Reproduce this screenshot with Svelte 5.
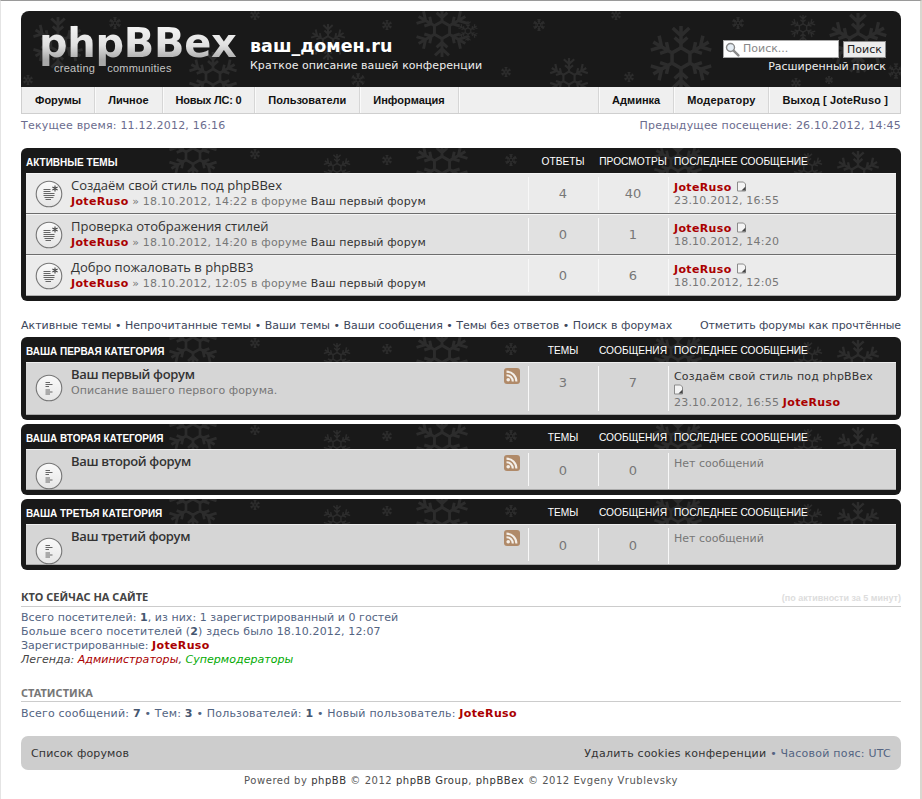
<script>
  const topics = [
    { t: 'Создаём свой стиль под phpBBex', d: '18.10.2012, 14:22', a: 4, b: 40, l: '23.10.2012, 16:55' },
    { t: 'Проверка отображения стилей', d: '18.10.2012, 14:20', a: 0, b: 1, l: '18.10.2012, 14:20' },
    { t: 'Добро пожаловать в phpBB3', d: '18.10.2012, 12:05', a: 0, b: 6, l: '18.10.2012, 12:05' }
  ];
  const flakes = [
    [37, 32, 26], [94, 12, 6], [234, 4, 5], [7, 69, 5], [307, 31, 18], [366, 14, 5], [421, 19, 27], [337, 69, 7], [192, 66, 25],
    [447, 20, 10], [518, 14, 6], [485, 61, 5], [548, 67, 20], [595, 4, 5], [608, 66, 5], [660, 47, 32], [717, 12, 6],
    [782, 17, 13], [837, 32, 30], [775, 72, 5], [808, 69, 4], [875, 60, 8]
  ];
  const barFlakes = [
    [172, 8, 25], [234, 6, 5], [316, 20, 14], [366, 12, 5], [421, 17, 27], [490, 12, 6], [657, 15, 25], [787, 20, 15], [837, 25, 22]
  ];
  const arms = [0, 60, 120, 180, 240, 300];
</script>

{#snippet flake(x, y, r)}
  <g transform="translate({x} {y}) scale({r / 10})" stroke-width={Math.max(1.1, 12 / r)}>
    {#each arms as a}
      <g transform="rotate({a})">
        <path d="M0 -3V-10M0 -7L-2.6 -9.4M0 -7L2.6 -9.4M0 -4.6L-2 -6.4M0 -4.6L2 -6.4" />
      </g>
    {/each}
    <path d="M0 -3.2L2.8 -1.6V1.6L0 3.2L-2.8 1.6V-1.6Z" />
  </g>
{/snippet}

{#snippet snow(list, h)}
  <svg class="snow" width="880" height={h} viewBox="0 0 880 {h}" aria-hidden="true">
    {#each list as f}{@render flake(f[0], f[1], f[2])}{/each}
  </svg>
{/snippet}

{#snippet bubble(star)}
  <svg class="bubble" width="28" height="28" viewBox="0 0 28 28" aria-hidden="true">
    <defs>
      <linearGradient id="bub" x1="0" y1="0" x2="0" y2="1">
        <stop offset="0" stop-color="#fafafa" /><stop offset="1" stop-color="#e6e6e6" />
      </linearGradient>
    </defs>
    <circle cx="14" cy="14" r="12.8" fill="url(#bub)" stroke="#777" stroke-width="1.1" />
    {#if star}
      <path d="M8.5 9.5H15.5M8.5 11.5H15.5M8.5 13.5H19.5M8.5 15.5H19.5M9.5 17.5H18.5M10.5 19.5H16" stroke="#666" stroke-width="1" fill="none" />
      <path d="M20 5.5V11.5M17.4 7L22.6 10M22.6 7L17.4 10" stroke="#444" stroke-width="1.1" fill="none" />
    {:else}
      <path d="M10.5 8.5H15M10.5 10.5H17.5M10.5 12.5H14M10.5 16H15M10.5 18H17.5M10.5 20H15" stroke="#666" stroke-width="1" fill="none" />
    {/if}
  </svg>
{/snippet}

{#snippet post()}
  <svg class="post" width="10" height="11" viewBox="0 0 10 11" aria-hidden="true">
    <path d="M.5 1H6.5L8.5 3V10H.5Z" fill="#f4f4f4" stroke="#8a8a8a" />
    <path d="M4.5 9.5L8.5 5.5V9.5Z" fill="#444" />
  </svg>
{/snippet}

{#snippet rss()}
  <svg class="rss" width="16" height="16" viewBox="0 0 16 16" aria-hidden="true">
    <rect width="16" height="16" rx="3" fill="#b08a69" />
    <circle cx="4.2" cy="11.8" r="1.8" fill="#f4efe9" />
    <path d="M2.5 7.2A6.3 6.3 0 0 1 8.8 13.5M2.5 3.6A9.9 9.9 0 0 1 12.4 13.5" fill="none" stroke="#f4efe9" stroke-width="2.1" />
  </svg>
{/snippet}

{#snippet forum(title, head, desc, cls, c1, c2)}
  <section class="block">
    {@render snow(barFlakes, 25)}
    <div class="bar">
      <span class="bar-title">{head}</span>
      <span class="c1 ch">ТЕМЫ</span>
      <span class="c2 ch">СООБЩЕНИЯ</span>
      <span class="c3 ch">ПОСЛЕДНЕЕ СООБЩЕНИЕ</span>
    </div>
    <div class="row forum {cls}">
      {@render bubble(false)}
      <div class="main">
        <div class="topic">{title}</div>
        {#if desc}<div class="desc">{desc}</div>{/if}
      </div>
      {@render rss()}
      <div class="c1 num">{c1}</div>
      <div class="c2 num">{c2}</div>
      <div class="c3 last">
        {#if c1 === 3}
          <div class="dark wide">Создаём свой стиль под phpBBex</div>
          <div class="icon-line">{@render post()}</div>
          <div class="grey date">23.10.2012, 16:55 <b class="red">JoteRuso</b></div>
        {:else}
          <div class="grey">Нет сообщений</div>
        {/if}
      </div>
    </div>
  </section>
{/snippet}

<div class="page">
  <header class="head">
    {@render snow(flakes, 76)}
    <div class="logo">
      <span class="logo-word">phpBBex</span>
      <span class="logo-sub"><span>creating</span><span>communities</span></span>
    </div>
    <div class="site">
      <div class="site-name">ваш_домен.ru</div>
      <div class="site-desc">Краткое описание вашей конференции</div>
    </div>
    <div class="search">
      <div class="search-row">
        <div class="search-input">
          <svg width="15" height="15" viewBox="0 0 15 15" aria-hidden="true">
            <circle cx="5.5" cy="5.5" r="4" fill="#e6eef5" stroke="#8a8a8a" stroke-width="1.4" />
            <path d="M8.6 8.6L13.4 13.4" stroke="#8c8c8c" stroke-width="2.4" stroke-linecap="round" />
          </svg>
          <span>Поиск...</span>
        </div>
        <div class="search-btn">Поиск</div>
      </div>
      <div class="adv">Расширенный поиск</div>
    </div>
  </header>

  <nav class="nav">
    <span class="nav-item">Форумы</span>
    <span class="nav-item">Личное</span>
    <span class="nav-item nls">Новых ЛС: 0</span>
    <span class="nav-item">Пользователи</span>
    <span class="nav-item">Информация</span>
    <span class="nav-gap"></span>
    <span class="nav-item left">Админка</span>
    <span class="nav-item left mod">Модератору</span>
    <span class="nav-item left end">Выход [ JoteRuso ]</span>
  </nav>

  <div class="times">
    <span>Текущее время: 11.12.2012, 16:16</span>
    <span>Предыдущее посещение: 26.10.2012, 14:45</span>
  </div>

  <section class="block active">
    {@render snow(barFlakes, 25)}
    <div class="bar">
      <span class="bar-title">АКТИВНЫЕ ТЕМЫ</span>
      <span class="c1 ch">ОТВЕТЫ</span>
      <span class="c2 ch">ПРОСМОТРЫ</span>
      <span class="c3 ch">ПОСЛЕДНЕЕ СООБЩЕНИЕ</span>
    </div>
    {#each topics as r, i}
      <div class="row topic-row" class:alt={i === 1}>
        {@render bubble(true)}
        <div class="main">
          <div class="topic">{r.t}</div>
          <div class="meta"><b class="red">JoteRuso</b> » {r.d} в форуме <span class="dark">Ваш первый форум</span></div>
        </div>
        <div class="c1 num">{r.a}</div>
        <div class="c2 num">{r.b}</div>
        <div class="c3 last">
          <div class="user"><b class="red">JoteRuso</b> {@render post()}</div>
          <div class="grey date">{r.l}</div>
        </div>
      </div>
    {/each}
  </section>

  <div class="links">
    <span>Активные темы <i>•</i> Непрочитанные темы <i>•</i> Ваши темы <i>•</i> Ваши сообщения <i>•</i> Темы без ответов <i>•</i> Поиск в форумах</span>
    <span class="mark">Отметить форумы как прочтённые</span>
  </div>

  {@render forum('Ваш первый форум', 'ВАША ПЕРВАЯ КАТЕГОРИЯ', 'Описание вашего первого форума.', 'tall', 3, 7)}
  {@render forum('Ваш второй форум', 'ВАША ВТОРАЯ КАТЕГОРИЯ', '', 'short', 0, 0)}
  {@render forum('Ваш третий форум', 'ВАША ТРЕТЬЯ КАТЕГОРИЯ', '', 'short', 0, 0)}

  <div class="h3 online-h">
    <span>КТО СЕЙЧАС НА САЙТЕ</span>
    <small>(по активности за 5 минут)</small>
  </div>
  <div class="lines">
    <div class="s05">Всего посетителей: <b>1</b>, из них: 1 зарегистрированный и 0 гостей</div>
    <div class="s14">Больше всего посетителей (<b>2</b>) здесь было 18.10.2012, 12:07</div>
    <div>Зарегистрированные: <b class="red">JoteRuso</b></div>
    <div class="s05"><em>Легенда: <span class="admin">Администраторы</span>, <span class="smod">Супермодераторы</span></em></div>
  </div>

  <div class="h3 stat-h"><span>СТАТИСТИКА</span></div>
  <div class="lines stat-lines">
    <div class="s22">Всего сообщений: <b>7</b> • Тем: <b>3</b> • Пользователей: <b>1</b> • Новый пользователь: <b class="red">JoteRuso</b></div>
  </div>

  <footer class="foot">
    <span class="dark fl">Список форумов</span>
    <span class="fr"><span class="dark">Удалить cookies конференции</span> <i>•</i> Часовой пояс: UTC</span>
  </footer>
  <div class="copy">Powered by <span>phpBB</span> © 2012 <span>phpBB Group</span>, <span>phpBBex</span> © 2012 Evgeny Vrublevsky</div>
</div>

<style>
  :global(body) { margin: 0; background: #fff; }
  .page {
    box-sizing: border-box;
    width: 922px;
    height: 799px;
    padding: 10px 19px 0 20px;
    border-top: 1px solid #9a9a9a;
    border-left: 1px solid #e4e4e4;
    border-right: 2px solid #d8d8d0;
    font: 11px/14px "DejaVu Sans", Verdana, sans-serif;
    color: #536482;
    overflow: hidden;
  }
  .head {
    position: relative;
    display: flex;
    height: 76px;
    border-radius: 8px 8px 0 0;
    background: #191919;
    overflow: hidden;
    color: #fff;
  }
  .snow { position: absolute; left: 0; top: 0; fill: none; stroke: #2c2c2c; }
  .logo { position: relative; width: 229px; flex: none; }
  .logo-word {
    position: absolute;
    left: 18px;
    top: 8px;
    font: 700 40px/48px "DejaVu Sans", sans-serif;
    letter-spacing: -.3px;
    background: linear-gradient(180deg, #f2f2f2 20%, #e0e0e0 55%, #a8a8a8 85%);
    -webkit-background-clip: text;
    background-clip: text;
    color: transparent;
  }
  .logo-sub {
    position: absolute;
    left: 33px;
    top: 50px;
    display: flex;
    gap: 12px;
    font: 11px/14px "Liberation Sans", Arial, sans-serif;
    letter-spacing: .25px;
    color: #c4c4c4;
  }
  .site { position: relative; padding-top: 24px; }
  .site-name { font: 700 17.5px/22px "DejaVu Sans", Verdana, sans-serif; }
  .site-desc { line-height: 14px; margin-top: 2px; color: #eee; letter-spacing: .06px; }
  .search { position: absolute; right: 15px; top: 29px; width: 163px; }
  .search-row { display: flex; justify-content: flex-end; gap: 4px; }
  .search-input {
    box-sizing: border-box;
    display: flex;
    align-items: center;
    gap: 3px;
    width: 116px;
    height: 18px;
    padding-left: 1px;
    border: 1px solid #aaa;
    background: #fff;
    color: #888;
  }
  .search-btn {
    box-sizing: border-box;
    width: 43px;
    height: 17px;
    margin-top: 1px;
    border: 1px solid #8a8a8a;
    background: #ececec;
    color: #222;
    text-align: center;
    line-height: 15px;
  }
  .adv { margin-top: 2px; text-align: right; color: #eee; }
  .nav {
    box-sizing: border-box;
    display: flex;
    height: 27px;
    background: #efefef;
    border: 1px solid #cfcfcf;
    border-top: 0;
    font: 700 11px/27px "Liberation Sans", Arial, sans-serif;
    color: #111;
  }
  .nav-item { padding: 0 13px; border-right: 1px solid #d6d6d6; box-shadow: 1px 0 0 #fafafa; }
  .nls { letter-spacing: -.25px; }
  .nav-gap { flex: 1; }
  .nav-item.left { border-right: 0; border-left: 1px solid #d6d6d6; box-shadow: inset 1px 0 0 #fafafa; }
  .nav-item.mod { letter-spacing: .2px; }
  .nav-item.end { padding-right: 12px; letter-spacing: .12px; }
  .times { display: flex; justify-content: space-between; margin-top: 5px; color: #6b6c8e; letter-spacing: .2px; }
  .block {
    position: relative;
    box-sizing: border-box;
    padding: 0 5px 5px;
    border-radius: 6px;
    background: #191919;
    overflow: hidden;
  }
  .active { margin-top: 15px; }
  .bar { position: relative; display: flex; align-items: center; height: 25px; padding-top: 3px; box-sizing: border-box; color: #fff; font: 10.2px/14px "Liberation Sans", Arial, sans-serif; }
  .bar-title { flex: 1; font-weight: 700; font-size: 10px; padding-top: 1px; }
  .ch { text-align: center; white-space: nowrap; }
  .c1 { width: 70px; flex: none; }
  .c2 { width: 70px; flex: none; }
  .c3 { width: 228px; flex: none; padding-left: 6px; box-sizing: border-box; }
  .bar .c3 { text-align: left; }
  .row { position: relative; display: flex; box-sizing: border-box; }
  .topic-row { height: 41px; background: #ebebeb; border-bottom: 1px solid #6d6d6d; border-top: 1px solid #f5f5f5; }
  .topic-row.alt { background: #e1e1e1; }
  .topic-row:last-child { border-bottom: 1px solid #b0b0b0; }
  .forum { background: #d6d6d6; border-top: 1px solid #eee; border-bottom: 1px solid #aaa; }
  .tall { height: 53px; }
  .short { height: 41px; }
  .bubble { flex: none; margin: 6px 8px 0 9px; }
  .forum .bubble { margin-top: 11px; }
  .short .bubble { margin-top: 12px; }
  .main { flex: 1; min-width: 0; padding-top: 3px; }
  .topic { font: 500 13px/16px "Open Sans", sans-serif; color: #333; }
  .forum .topic { font-weight: 600; letter-spacing: -.35px; }
  .meta { color: #777; margin-top: 2px; letter-spacing: .17px; }
  .desc { color: #777; margin-top: 2px; letter-spacing: .05px; }
  .dark { color: #333; }
  .grey { color: #777; }
  .red { color: #a00; letter-spacing: .35px; }
  .rss { flex: none; position: absolute; left: 478px; top: 5px; }
  .num {
    display: flex;
    justify-content: center;
    padding-top: 10px;
    font-size: 13px;
    color: #777;
    box-shadow: inset 1px 0 0 #f8f8f8;
    margin: 3px 0;
  }
  .short .num { padding-top: 11px; }
  .last { padding: 4px 0 0 6px; color: #777; box-shadow: inset 1px 0 0 #f8f8f8; margin: 3px 0 0; }
  .topic-row .last { padding-top: 4px; }
  .topic-row .last .user { line-height: 13px; }
  .topic-row .last .date { line-height: 13px; }
  .forum .last { padding-top: 4px; }
  .wide { letter-spacing: .17px; }
  .date { letter-spacing: .2px; }
  .icon-line { height: 12px; line-height: 12px; }
  .post { vertical-align: -1px; margin-left: 2px; }
  .icon-line .post { margin-left: 0; }
  .links { display: flex; justify-content: space-between; margin: 18px 0 4px; color: #3c465a; }
  .mark { letter-spacing: -.1px; }
  .links i, .foot i { font-style: normal; }
  .block + .block { margin-top: 4px; }
  .block .tall .last { margin: 3px 0; }
  .h3 {
    display: flex;
    justify-content: space-between;
    align-items: baseline;
    padding-bottom: 1px;
    border-bottom: 1px solid #ccc;
    font: 700 11px/14px "Noto Sans", sans-serif;
    color: #444;
  }
  .h3 small { font: 700 9px/14px "Liberation Sans", Arial, sans-serif; color: #ddd; }
  .online-h { margin-top: 20px; }
  .stat-h { margin-top: 19px; color: #777; }
  .lines { padding-top: 4px; }
  .stat-lines { padding-top: 5px; }
  .s05 { letter-spacing: .05px; }
  .s14 { letter-spacing: .14px; }
  .s22 { letter-spacing: .2px; }
  .lines b { color: #45566f; }
  .lines .red { color: #a00; }
  .lines em { color: #444; }
  .admin { color: #a00; }
  .smod { color: #0a0; }
  .foot {
    display: flex;
    justify-content: space-between;
    box-sizing: border-box;
    height: 34px;
    margin-top: 15px;
    padding: 1px 10px 0;
    align-items: center;
    border-radius: 7px;
    background: #cdcdcd;
  }
  .fl { letter-spacing: .14px; }
  .fr { letter-spacing: .23px; }
  .copy { margin-top: 4px; text-align: center; font-size: 10px; line-height: 14px; color: #555; letter-spacing: .54px; }
  .copy span { color: #333; }
</style>
